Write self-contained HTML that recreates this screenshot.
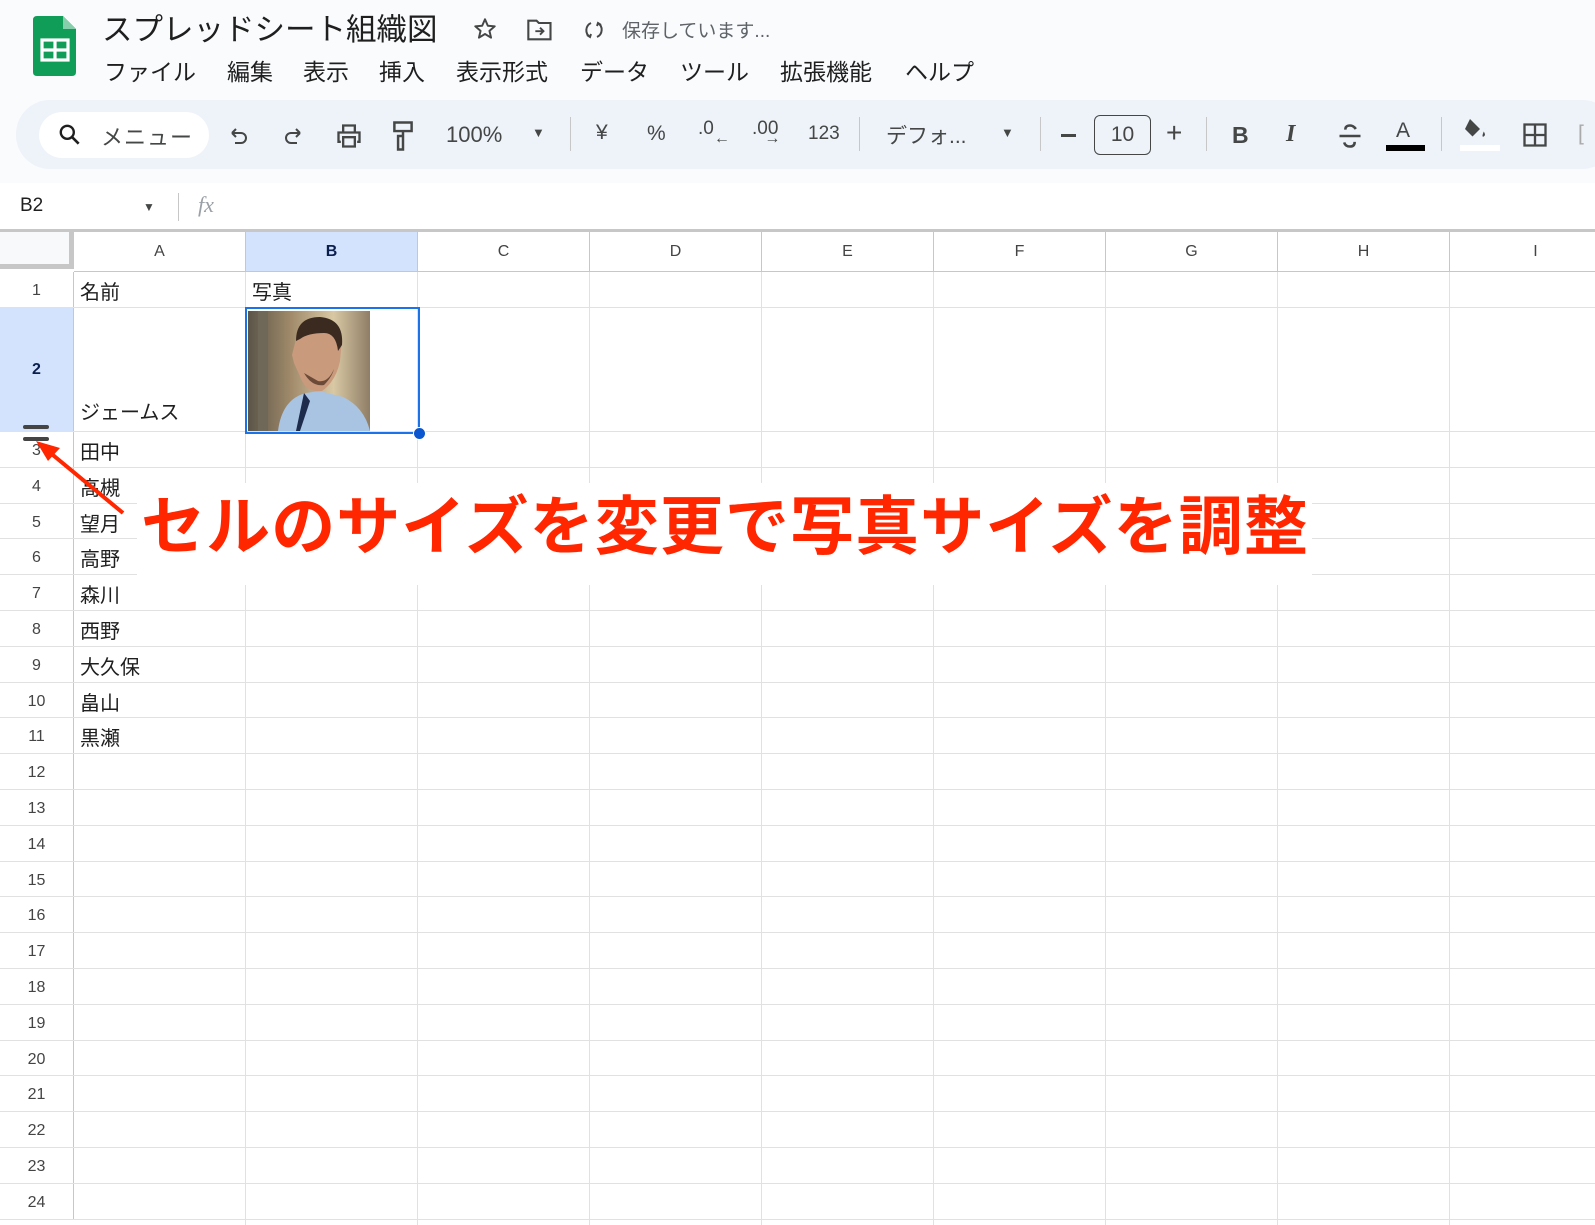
<!DOCTYPE html>
<html><head><meta charset="utf-8"><style>
*{margin:0;padding:0;box-sizing:border-box}
body{width:1595px;height:1225px;overflow:hidden;background:#fff;font-family:"Liberation Sans","Noto Sans CJK JP",sans-serif;color:#1f1f1f;position:relative}
.a{position:absolute}
.top{left:0;top:0;width:1595px;height:183px;background:#f9fbfd}
.tb{left:16px;top:100px;width:1600px;height:69px;background:#eef2f9;border-radius:34px}
.menu span{position:absolute;top:53px;font-size:23px;color:#1f1f1f}
.ic{position:absolute;font-size:21px;color:#444746}
.sep{position:absolute;top:117px;width:1px;height:34px;background:#c7c7c7}
.grid{left:74px;top:232px;width:1521px;height:993px;background:repeating-linear-gradient(to right,transparent 0,transparent 171px,#e1e1e1 171px,#e1e1e1 172px)}
.r{position:absolute;left:0;width:1595px;height:35.8px;border-bottom:1px solid #e1e1e1}
.n{position:absolute;left:0;top:0;width:74px;height:100%;border-right:1px solid #c7c7c7;text-align:center;font-size:16px;color:#444;line-height:37px;background:#fff}
.t{position:absolute;left:80px;top:4px;font-size:20px;color:#1f1f1f}
.ch{position:absolute;top:232px;height:40px;width:172px;border-right:1px solid #c7c7c7;border-bottom:1px solid #c7c7c7;text-align:center;font-size:16px;color:#444;line-height:40px;background:#fff}
</style></head><body>
<div class="a top"></div>
<svg class="a" style="left:33px;top:16px" width="44" height="60" viewBox="0 0 44 60">
<path d="M4 0H30L43 13V56Q43 60 39 60H4Q0 60 0 56V4Q0 0 4 0Z" fill="#0f9d58"/>
<path d="M30 0V13H43Z" fill="#87ceac"/>
<rect x="9" y="24" width="26" height="20" fill="none" stroke="#fff" stroke-width="3.2"/>
<path d="M9 34H35M22 24V44" stroke="#fff" stroke-width="3.2"/>
</svg>
<div class="a" style="left:102px;top:5px;font-size:30.5px;color:#1f1f1f">スプレッドシート組織図</div>
<svg class="a" style="left:472px;top:16px" width="26" height="26" viewBox="0 0 24 24"><path d="M12 3l2.6 6 6.4.5-4.9 4.2 1.5 6.3L12 16.6 6.4 20l1.5-6.3L3 9.5l6.4-.5z" fill="none" stroke="#444746" stroke-width="1.8" stroke-linejoin="round"/></svg>
<svg class="a" style="left:526px;top:17px" width="28" height="26" viewBox="0 0 24 22"><path d="M2 3h7l2 2h10v14H2z" fill="none" stroke="#444746" stroke-width="1.8"/><path d="M8 12h7m-3-3l3 3-3 3" fill="none" stroke="#444746" stroke-width="1.6"/></svg>
<svg class="a" style="left:582px;top:18px" width="24" height="24" viewBox="0 0 24 24"><path d="M9 5A8 8 0 0 0 8 19M15 19A8 8 0 0 0 16 5M5 17l3 2 1-3M19 7l-3-2-1 3" fill="none" stroke="#444746" stroke-width="2"/></svg>
<div class="a" style="left:622px;top:16px;font-size:19px;color:#5f6368">保存しています...</div>
<div class="menu">
<span style="left:104px">ファイル</span><span style="left:227px">編集</span><span style="left:303px">表示</span><span style="left:379px">挿入</span><span style="left:456px">表示形式</span><span style="left:580px">データ</span><span style="left:680px">ツール</span><span style="left:780px">拡張機能</span><span style="left:905px">ヘルプ</span>
</div>
<div class="a tb"></div>
<div class="a" style="left:39px;top:112px;width:170px;height:46px;background:#fff;border-radius:23px"></div>
<svg class="a" style="left:57px;top:122px" width="26" height="26" viewBox="0 0 24 24"><circle cx="9.5" cy="9.5" r="6" fill="none" stroke="#1f1f1f" stroke-width="2.2"/><path d="M14 14l6 6" stroke="#1f1f1f" stroke-width="2.4"/></svg>
<div class="a" style="left:101px;top:120px;font-size:22px;color:#444746;letter-spacing:1px">メニュー</div>
<svg class="a" style="left:227px;top:125px" width="24" height="24" viewBox="0 0 24 24"><path d="M5 8h9a5 5 0 0 1 0 10H8M5 8l4-4M5 8l4 4" fill="none" stroke="#444746" stroke-width="2"/></svg>
<svg class="a" style="left:281px;top:125px" width="24" height="24" viewBox="0 0 24 24"><path d="M19 8h-9a5 5 0 0 0 0 10h6M19 8l-4-4M19 8l-4 4" fill="none" stroke="#444746" stroke-width="2"/></svg>
<svg class="a" style="left:335px;top:122px" width="28" height="28" viewBox="0 0 24 24"><path d="M7 8V3h10v5M5 17H3V9h18v8h-2M7 13h10v8H7z" fill="none" stroke="#444746" stroke-width="2"/></svg>
<svg class="a" style="left:390px;top:120px" width="26" height="32" viewBox="0 0 20 26"><path d="M3 2h14v7H3zM10 9v4H6v11h4V13" fill="none" stroke="#444746" stroke-width="2"/></svg>
<div class="ic" style="left:446px;top:122px;font-size:22px">100%</div>
<div class="ic" style="left:532px;top:125px;font-size:13px">▼</div>
<div class="sep" style="left:570px"></div>
<div class="ic" style="left:596px;top:121px">¥</div>
<div class="ic" style="left:647px;top:122px">%</div>
<div class="ic" style="left:698px;top:118px;font-size:19px">.0<span style="font-size:16px;position:relative;top:9px">←</span></div>
<div class="ic" style="left:752px;top:118px;font-size:19px">.00<span style="font-size:16px;position:relative;top:9px;margin-left:-14px">→</span></div>
<div class="ic" style="left:808px;top:123px;font-size:19px">123</div>
<div class="sep" style="left:859px"></div>
<div class="ic" style="left:886px;top:120px;font-size:21px">デフォ...</div>
<div class="ic" style="left:1001px;top:125px;font-size:13px">▼</div>
<div class="sep" style="left:1040px"></div>
<div class="a" style="left:1061px;top:134px;width:15px;height:2.5px;background:#444746"></div>
<div class="a" style="left:1094px;top:115px;width:57px;height:40px;border:1.5px solid #444746;border-radius:6px;text-align:center;line-height:37px;font-size:21px;color:#444746">10</div>
<div class="ic" style="left:1166px;top:117px;font-size:28px">+</div>
<div class="sep" style="left:1206px"></div>
<div class="ic" style="left:1232px;top:122px;font-size:23px;font-weight:bold">B</div>
<div class="ic" style="left:1286px;top:121px;font-size:24px;font-style:italic;font-family:'Liberation Serif',serif;font-weight:bold">I</div>
<svg class="a" style="left:1336px;top:122px" width="28" height="28" viewBox="0 0 24 24"><path d="M17 6Q15 3 12 3 8 3 8 6.5M7 17.5Q8 21 12 21 16 21 16 17" fill="none" stroke="#444746" stroke-width="2.2"/><path d="M3 12h18" stroke="#444746" stroke-width="2.2"/></svg>
<div class="ic" style="left:1396px;top:119px;font-size:21px">A</div>
<div class="a" style="left:1386px;top:145px;width:39px;height:6px;background:#000"></div>
<div class="sep" style="left:1441px"></div>
<svg class="a" style="left:1460px;top:116px" width="30" height="26" viewBox="0 0 24 20"><path d="M8 2l8 8-6 6-6-6z" fill="#444746"/><path d="M19 12q2 3 0 4t0-4" fill="#444746"/></svg>
<div class="a" style="left:1460px;top:145px;width:40px;height:6px;background:#fff"></div>
<svg class="a" style="left:1521px;top:121px" width="28" height="28" viewBox="0 0 24 24"><path d="M3 3h18v18H3zM12 3v18M3 12h18" fill="none" stroke="#444746" stroke-width="2"/></svg>
<div class="ic" style="left:1578px;top:122px;color:#aaa">[</div>
<div class="a" style="left:20px;top:195px;font-size:19px;color:#1f1f1f">B2</div>
<div class="a" style="left:143px;top:200px;font-size:12px;color:#444746">▼</div>
<div class="a" style="left:178px;top:193px;width:1px;height:28px;background:#c7c7c7"></div>
<div class="a" style="left:198px;top:192px;font-size:22px;color:#9aa0a6;font-style:italic;font-family:'Liberation Serif',serif">fx</div>
<div class="a" style="left:0;top:229px;width:1595px;height:3px;background:#c7c7c7"></div>
<div class="a grid"></div>
<div class="ch" style="left:0;width:74px;background:#f8f9fa;border-right:5px solid #c7c7c7;border-bottom:5px solid #c7c7c7;height:37px"></div>
<div class="ch" style="left:74px">A</div>
<div class="ch" style="left:246px;background:#d3e3fd;color:#0b1f4f;font-weight:bold">B</div>
<div class="ch" style="left:418px">C</div>
<div class="ch" style="left:590px">D</div>
<div class="ch" style="left:762px">E</div>
<div class="ch" style="left:934px">F</div>
<div class="ch" style="left:1106px">G</div>
<div class="ch" style="left:1278px">H</div>
<div class="ch" style="left:1450px">I</div>
<div class="r" style="top:272px;height:36px"><div class="n">1</div><div class="t">名前</div><div class="t" style="left:252px">写真</div></div>
<div class="r" style="top:308px;height:124px"><div class="n" style="background:#d3e3fd;color:#0b1f4f;font-weight:bold;line-height:124px">2</div><div class="t" style="top:88px">ジェームス</div></div>
<div class="r" style="top:432px"><div class="n">3</div><div class="t">田中</div></div>
<div class="r" style="top:467.8px"><div class="n">4</div><div class="t">高槻</div></div>
<div class="r" style="top:503.6px"><div class="n">5</div><div class="t">望月</div></div>
<div class="r" style="top:539.4px"><div class="n">6</div><div class="t">高野</div></div>
<div class="r" style="top:575.2px"><div class="n">7</div><div class="t">森川</div></div>
<div class="r" style="top:611px"><div class="n">8</div><div class="t">西野</div></div>
<div class="r" style="top:646.8px"><div class="n">9</div><div class="t">大久保</div></div>
<div class="r" style="top:682.6px"><div class="n">10</div><div class="t">畠山</div></div>
<div class="r" style="top:718.4px"><div class="n">11</div><div class="t">黒瀬</div></div>
<div class="r" style="top:754.2px"><div class="n">12</div></div>
<div class="r" style="top:790px"><div class="n">13</div></div>
<div class="r" style="top:825.8px"><div class="n">14</div></div>
<div class="r" style="top:861.6px"><div class="n">15</div></div>
<div class="r" style="top:897.4px"><div class="n">16</div></div>
<div class="r" style="top:933.2px"><div class="n">17</div></div>
<div class="r" style="top:969px"><div class="n">18</div></div>
<div class="r" style="top:1004.8px"><div class="n">19</div></div>
<div class="r" style="top:1040.6px"><div class="n">20</div></div>
<div class="r" style="top:1076.4px"><div class="n">21</div></div>
<div class="r" style="top:1112.2px"><div class="n">22</div></div>
<div class="r" style="top:1148px"><div class="n">23</div></div>
<div class="r" style="top:1183.8px"><div class="n">24</div></div>
<div class="a" style="left:74px;top:272px;width:1521px;height:953px;background:repeating-linear-gradient(to right,transparent 0,transparent 171px,#e1e1e1 171px,#e1e1e1 172px);pointer-events:none"></div>
<svg class="a" style="left:248px;top:311px" width="122" height="120" viewBox="0 0 122 120">
<defs><linearGradient id="bg" x1="0" x2="1"><stop offset="0" stop-color="#5a5448"/><stop offset=".35" stop-color="#a08a6a"/><stop offset=".7" stop-color="#d9c8a4"/><stop offset="1" stop-color="#8f7e66"/></linearGradient></defs>
<rect width="122" height="120" fill="url(#bg)"/>
<rect x="10" y="0" width="10" height="120" fill="#6f6757"/>
<path d="M30 120Q34 88 58 82L72 80 95 86Q116 96 122 120Z" fill="#a9c4e2"/>
<path d="M56 82L62 90 52 120H48Z" fill="#1e2b4a"/>
<path d="M48 28Q50 8 72 8Q92 10 94 28L92 50Q88 70 74 80Q60 82 54 70L46 52 44 44Z" fill="#c99a7c"/>
<path d="M48 30Q48 6 72 6Q96 8 94 34L90 40Q88 22 76 22Q60 22 52 28Z" fill="#3a2a1f"/>
<path d="M56 62Q64 76 76 74 84 66 86 58Q80 72 70 70Z" fill="#6b4a38"/>
</svg>
<div class="a" style="left:245px;top:307px;width:175px;height:127px;border:2px solid #1a73e8"></div>
<div class="a" style="left:413px;top:427px;width:13px;height:13px;border-radius:50%;background:#0b57d0;border:1px solid #fff"></div>
<div class="a" style="left:23px;top:425px;width:26px;height:4px;border-radius:2px;background:#444"></div>
<div class="a" style="left:23px;top:437px;width:26px;height:4px;border-radius:2px;background:#444"></div>
<div class="a" style="left:137px;top:483px;width:1175px;height:102px;background:#fff"></div>
<div class="a" style="left:141px;top:476px;font-size:64px;font-weight:bold;color:#ff2600;white-space:nowrap;letter-spacing:1.1px;font-family:'Noto Sans CJK JP',sans-serif">セルのサイズを変更で写真サイズを調整</div>
<svg class="a" style="left:0;top:0" width="200" height="560"><path d="M123 513L42 446" stroke="#ff2600" stroke-width="4"/><path d="M36 441L60 448 48 461Z" fill="#ff2600"/></svg>
</body></html>
